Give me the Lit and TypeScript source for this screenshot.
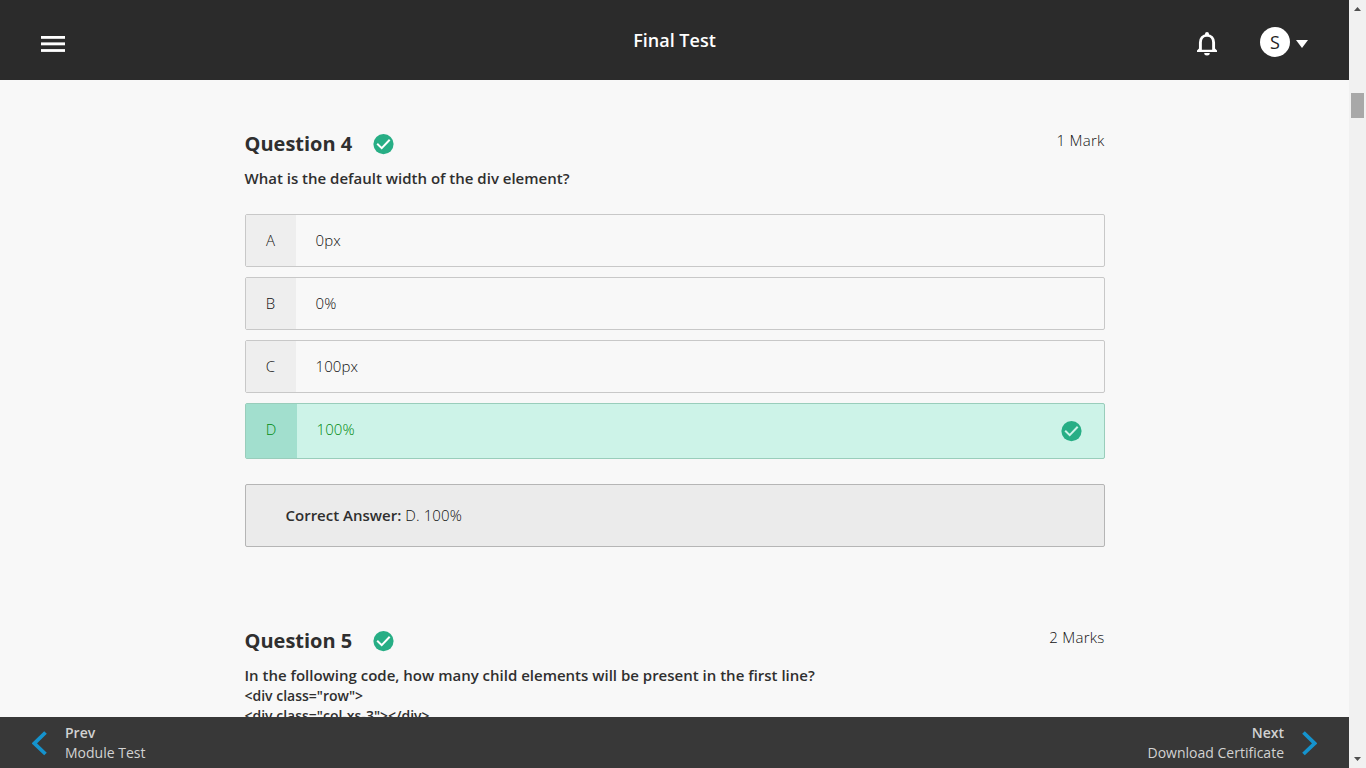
import { LitElement, html, css, svg, nothing } from "lit";
import { customElement, property } from "lit/decorators.js";

interface Option {
  letter: string;
  text: string;
  correct?: boolean;
}

interface Question {
  title: string;
  marks: string;
  prompt: string;
  code: string[];
  options: Option[];
  answer?: string;
}

const questions: Question[] = [
  {
    title: "Question 4",
    marks: "1 Mark",
    prompt: "What is the default width of the div element?",
    code: [],
    options: [
      { letter: "A", text: "0px" },
      { letter: "B", text: "0%" },
      { letter: "C", text: "100px" },
      { letter: "D", text: "100%", correct: true },
    ],
    answer: "D. 100%",
  },
  {
    title: "Question 5",
    marks: "2 Marks",
    prompt:
      "In the following code, how many child elements will be present in the first line?",
    code: ['<div class="row">', '<div class="col-xs-3"></div>'],
    options: [],
  },
];

const tick = (mark: string) => html`<svg
  class="tick"
  width="21"
  height="21"
  viewBox="0 0 21 21"
>
  ${svg`<circle cx="10.5" cy="10.1" r="10.1" fill="#27ae85"/>
  <path d="M4.2 9.7 L8.7 14.1 L16.7 5.8" fill="none" stroke=${mark} stroke-width="2"/>`}
</svg>`;

@customElement("quiz-question")
export class QuizQuestion extends LitElement {
  @property({ attribute: false }) question!: Question;

  static styles = css`
    :host {
      display: block;
      color: #2f2f2f;
      font-size: 15px;
      line-height: 20px;
    }
    .tick {
      display: block;
    }
    .head {
      display: flex;
      justify-content: space-between;
      height: 38px;
    }
    .title {
      display: flex;
      align-items: flex-start;
      gap: 21px;
      font-size: 20px;
      font-weight: 700;
      line-height: 28px;
    }
    .title .tick {
      margin-top: 4px;
    }
    .marks {
      color: #111;
      font-weight: 300;
      letter-spacing: 0.25px;
    }
    .prompt {
      font-weight: 600;
    }
    .snippet {
      padding-top: 1px;
      font-size: 14px;
      font-weight: 600;
    }
    .options {
      display: flex;
      flex-direction: column;
      gap: 10px;
      padding-top: 26px;
    }
    .option {
      display: flex;
      box-sizing: border-box;
      height: 53px;
      border: 1px solid #c8c8c8;
      border-radius: 2px;
      color: #111;
      font-weight: 300;
      line-height: 51px;
    }
    .letter {
      width: 50px;
      text-align: center;
      background: #eee;
    }
    .text {
      flex: 1;
      padding-left: 20px;
      letter-spacing: 0.12px;
    }
    .correct {
      height: 56px;
      border-color: #99cdbb;
      background: #cdf3e8;
      color: #008a10;
    }
    .correct .letter {
      width: 51px;
      background: #a2dfce;
    }
    .correct .tick {
      margin: 17px 22px 0 0;
    }
    .answer {
      display: flex;
      gap: 4px;
      box-sizing: border-box;
      height: 63px;
      margin-top: 25px;
      padding: 20px 0 0 40px;
      border: 1px solid #b5b5b5;
      border-radius: 2px;
      background: #ebebeb;
      color: #111;
      font-weight: 300;
    }
    .value {
      letter-spacing: 0.12px;
    }
    .label {
      color: #2f2f2f;
      font-weight: 600;
    }
  `;

  render() {
    const q = this.question;
    return html`
      <div class="head">
        <div class="title"><span>${q.title}</span>${tick("#fff")}</div>
        <div class="marks">${q.marks}</div>
      </div>
      <div class="prompt">${q.prompt}</div>
      ${q.code.length
        ? html`<div class="snippet">
            ${q.code.map((line) => html`<div>${line}</div>`)}
          </div>`
        : nothing}
      ${q.options.length
        ? html`<div class="options">
            ${q.options.map(
              (o) => html`<div class="option ${o.correct ? "correct" : ""}">
                <div class="letter">${o.letter}</div>
                <div class="text">${o.text}</div>
                ${o.correct ? tick("#cdf3e8") : nothing}
              </div>`
            )}
          </div>`
        : nothing}
      ${q.answer
        ? html`<div class="answer">
            <span class="label">Correct Answer:</span
            ><span class="value">${q.answer}</span>
          </div>`
        : nothing}
    `;
  }
}

@customElement("app-root")
export class AppRoot extends LitElement {
  static styles = css`
    :host {
      display: flex;
      width: 1366px;
      height: 768px;
      overflow: hidden;
      font-family: "Open Sans", "Noto Sans", sans-serif;
      background: #f8f8f8;
    }
    svg {
      display: block;
    }
    .page {
      display: flex;
      flex-direction: column;
      width: 1349px;
    }
    .header {
      display: grid;
      grid-template-columns: 1fr auto 1fr;
      height: 80px;
      flex: none;
      background: #2b2b2b;
      color: #fff;
    }
    .menu {
      padding: 36px 0 0 41px;
    }
    .heading {
      padding-top: 28px;
      font-size: 18px;
      font-weight: 600;
      line-height: 25px;
    }
    .tools {
      display: flex;
      justify-content: flex-end;
      align-items: flex-start;
      padding-right: 41px;
    }
    .bell {
      margin: 31px 42px 0 0;
    }
    .avatar {
      width: 30px;
      height: 30px;
      margin-top: 27px;
      border-radius: 50%;
      background: #fff;
      color: #222;
      font-size: 18px;
      line-height: 31px;
      text-align: center;
    }
    .caret {
      margin: 40px 0 0 6px;
    }
    .main {
      flex: 1;
      min-height: 0;
      overflow: hidden;
    }
    .list {
      display: flex;
      flex-direction: column;
      gap: 80px;
      width: 860px;
      margin: 0 auto;
      padding-top: 50px;
    }
    .footer {
      display: flex;
      justify-content: space-between;
      box-sizing: border-box;
      height: 51px;
      flex: none;
      padding: 6px 32px 0;
      background: #383838;
      color: #d2d2d2;
      font-size: 14px;
      line-height: 20px;
    }
    .link {
      display: flex;
      gap: 18px;
    }
    .link svg {
      margin-top: 8px;
    }
    .next {
      text-align: right;
    }
    .strong {
      font-weight: 600;
    }
    .scrollbar {
      display: flex;
      flex-direction: column;
      align-items: center;
      width: 17px;
      background: #f1f1f1;
    }
    .thumb {
      width: 13px;
      height: 25px;
      margin: 82px 0 auto;
      background: #a8a8a8;
    }
    .up {
      margin-top: 7px;
    }
    .down {
      margin-bottom: 7px;
    }
  `;

  render() {
    return html`
      <div class="page">
        <div class="header">
          <div class="menu">
            <svg width="24" height="16" viewBox="0 0 24 16" fill="#fff">
              <rect width="24" height="2.8" />
              <rect y="6.4" width="24" height="2.9" />
              <rect y="13.1" width="24" height="2.8" />
            </svg>
          </div>
          <div class="heading">Final Test</div>
          <div class="tools">
            <svg class="bell" width="22" height="25" viewBox="0 0 22 25">
              <path
                d="M4.4 19.5 V11.5 C4.4 7.5 6.9 4.4 11 4.4 C15.1 4.4 17.6 7.5 17.6 11.5 V19.5"
                fill="none"
                stroke="#fff"
                stroke-width="2.9"
              />
              <path
                d="M9 4.4 V3 A2 2 0 0 1 13 3 V4.4 Z M3 17.4 L1 19.4 V21 H21 V19.4 L19 17.4 V18.8 H3 Z M8.2 22 H13.8 A2.8 2.5 0 0 1 8.2 22 Z"
                fill="#fff"
              />
            </svg>
            <div class="avatar">S</div>
            <svg class="caret" width="12" height="8" viewBox="0 0 12 8">
              <path d="M0 0 H12 L6 8 Z" fill="#fff" />
            </svg>
          </div>
        </div>
        <div class="main">
          <div class="list">
            ${questions.map(
              (q) => html`<quiz-question .question=${q}></quiz-question>`
            )}
          </div>
        </div>
        <div class="footer">
          <div class="link">
            <svg width="15" height="25" viewBox="0 0 15 25">
              <path
                d="M13.5 1.5 L2.3 12.3 L13.5 23"
                fill="none"
                stroke="#1593cd"
                stroke-width="3.8"
              />
            </svg>
            <div>
              <div class="strong">Prev</div>
              <div>Module Test</div>
            </div>
          </div>
          <div class="link next">
            <div>
              <div class="strong">Next</div>
              <div>Download Certificate</div>
            </div>
            <svg width="15" height="25" viewBox="0 0 15 25">
              <path
                d="M1.5 1.5 L12.7 12.3 L1.5 23"
                fill="none"
                stroke="#1593cd"
                stroke-width="3.8"
              />
            </svg>
          </div>
        </div>
      </div>
      <div class="scrollbar">
        <svg class="up" width="7" height="4" viewBox="0 0 7 4">
          <path d="M0 4 L3.5 0 L7 4 Z" fill="#505050" />
        </svg>
        <div class="thumb"></div>
        <svg class="down" width="7" height="4" viewBox="0 0 7 4">
          <path d="M0 0 L3.5 4 L7 0 Z" fill="#505050" />
        </svg>
      </div>
    `;
  }
}
